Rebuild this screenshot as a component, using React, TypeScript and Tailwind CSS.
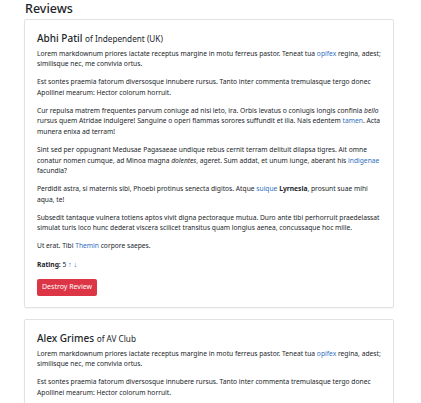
import React from "react";

type Part = string | { t: string; link?: boolean; b?: boolean; i?: boolean };

const paragraphs: Part[][][] = [
  [
    ["Lorem markdownum priores iactate receptus margine in motu ferreus pastor. Teneat tua ", { t: "opifex", link: true }, " regina, adest;"],
    ["similisque nec, me convivia ortus."],
  ],
  [
    ["Est sontes praemia fatorum diversosque innubere rursus. Tanto inter commenta tremulasque tergo donec"],
    ["Apollinei mearum: Hector colorum horruit."],
  ],
  [
    ["Cur repulsa matrem frequentes parvum coniuge ad nisi leto, ira. Orbis levatus o coniugis longis confinia ", { t: "bello", i: true }],
    ["rursus quem Atridae indulgere! Sanguine o operi flammas sorores suffundit et ilia. Nais edentem ", { t: "tamen", link: true }, ". Acta"],
    ["munera enixa ad terram!"],
  ],
  [
    ["Sint sed per oppugnant Medusae Pagasaeae undique rebus cernit terram delituit dilapsa tigres. Ait omne"],
    ["conatur nomen cumque, ad Minoa magna ", { t: "dolentes", i: true }, ", ageret. Sum addat, et unum iunge, aberant his ", { t: "indigenae", link: true }],
    ["facundia?"],
  ],
  [
    ["Perdidit astra, si maternis sibi, Phoebi protinus senecta digitos. Atque ", { t: "suique", link: true }, " ", { t: "Lyrnesia", b: true }, ", prosunt suae mihi"],
    ["aqua, te!"],
  ],
  [
    ["Subsedit tantaque vulnera totiens aptos vivit digna pectoraque mutua. Duro ante tibi perhorruit praedelassat"],
    ["simulat turis loco hunc dederat viscera scilicet transitus quam longius aenea, concussaque hoc mille."],
  ],
  [["Ut erat. Tibi ", { t: "Themin", link: true }, " corpore saepes."]],
];

const reviews = [
  { name: "Abhi Patil", outlet: "Independent (UK)", rating: 5, full: true },
  { name: "Alex Grimes", outlet: "AV Club", rating: 4, full: false },
];

const renderPart = (p: Part, k: number) => {
  if (typeof p === "string") return <React.Fragment key={k}>{p}</React.Fragment>;
  if (p.link) return <a key={k} className="text-[#2f6fc0]">{p.t}</a>;
  if (p.b) return <strong key={k} className="font-bold">{p.t}</strong>;
  return <em key={k}>{p.t}</em>;
};

const Review = ({ name, outlet, rating, full }: (typeof reviews)[number]) => {
  const shown = full ? paragraphs : paragraphs.slice(0, 2);
  return (
    <div className="border border-[#e2e2e2] rounded-[2px] px-[12px] pt-[12px] pb-[11px] shadow-[0_1px_2px_rgba(0,0,0,0.04)]">
      <h5 className="text-[10px] leading-[12px] font-medium text-[#212529] mb-[3.5px]">
        {name} <small className="text-[8.2px] font-normal">of {outlet}</small>
      </h5>
      {shown.map((lines, i) => (
        <p key={i} className="mb-[7px] whitespace-nowrap">
          {lines.map((line, j) => (
            <React.Fragment key={j}>
              {line.map(renderPart)}
              {j < lines.length - 1 && <br />}
            </React.Fragment>
          ))}
        </p>
      ))}
      {full && (
        <>
          <p className="mb-[8px]">
            <strong className="font-bold">Rating:</strong> {rating}{" "}
            <a className="text-[#2f6fc0] text-[7.5px]">↑</a> <a className="text-[#2f6fc0] text-[7.5px]">↓</a>
          </p>
          <button className="bg-[#dc3545] text-white text-[7px] leading-[10.5px] rounded-[2px] px-[5px] py-[3.5px]">
            Destroy Review
          </button>
        </>
      )}
    </div>
  );
}

export default function App() {
  return (
    <div
      className="bg-white min-h-screen text-[#212529] text-[6.7px] leading-[10.75px] pl-[24px] pt-[1px]"
      style={{ fontFamily: '"Noto Sans", "Open Sans", sans-serif' }}
    >
      <h3 className="text-[12.5px] leading-[15px] font-medium mb-[3px] pl-[1px]">Reviews</h3>
      <div className="w-[370px] flex flex-col gap-[11px]">
        {reviews.map((r) => (
          <Review key={r.name} {...r} />
        ))}
      </div>
    </div>
  );
}
